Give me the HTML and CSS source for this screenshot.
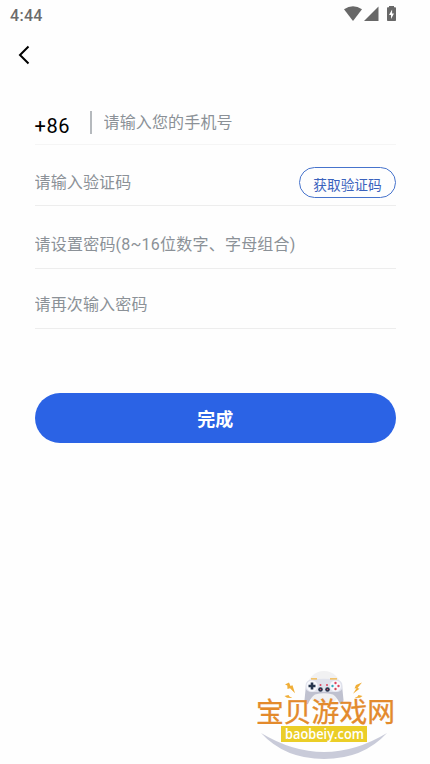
FILE: index.html
```
<!DOCTYPE html>
<html lang="zh-CN">
<head>
    <meta charset="UTF-8">
    <meta name="viewport" content="width=device-width, initial-scale=1.0">
    <title>设置密码</title>
    <link rel="stylesheet" href="styles.css">
</head>
<body>
    <div class="status-bar">
        <span class="time">4:44</span>
        <svg class="status-icons" width="54" height="16" viewBox="0 0 54 16">
            <path d="M0 3.3Q9 -2.7 18 3.3L9 15Z"/>
            <path d="M34.5 0.5V15H20Z"/>
            <path d="M45 1.3V0h5v1.3h1.2q.8 0 .8.8v12.1q0 .8-.8.8h-7.4q-.8 0-.8-.8V2.1q0-.8.8-.8Z"/>
            <path class="bolt" d="M48.1 3.6L45 9h2v4l3-5.4h-1.9Z"/>
        </svg>
    </div>

    <header class="nav">
        <button type="button" class="back" aria-label="返回">
            <svg width="14" height="20" viewBox="0 0 14 20">
                <path d="M11.5 1.5L3 10L11.5 18.5"/>
            </svg>
        </button>
    </header>

    <form class="form">
        <div class="field field-phone">
            <span class="code">+86</span>
            <span class="divider"></span>
            <input type="tel" name="phone" placeholder="请输入您的手机号">
        </div>
        <div class="field field-verify">
            <input type="text" name="verifyCode" placeholder="请输入验证码">
            <button type="button" class="get-code">获取验证码</button>
        </div>
        <div class="field field-password">
            <input type="password" name="password" placeholder="请设置密码(8~16位数字、字母组合)">
        </div>
        <div class="field field-confirm">
            <input type="password" name="passwordConfirm" placeholder="请再次输入密码">
        </div>
        <button type="submit" class="submit">完成</button>
    </form>

    <svg class="watermark" width="170" height="104" viewBox="0 0 170 104">
        <circle cx="79" cy="28" r="17" fill="#f1f1f2"/>
        <path d="M16 73Q79 111 142 73Q118 99 79 99Q40 99 16 73Z" fill="#c9cbd9"/>
        <!-- 手柄 -->
        <path d="M61 25L59.5 40Q60 45 63 44Q66 37 70 34.5Q79 32 88 34.5Q92 37 95 44Q98 45 98.5 40L97 25Z" fill="#bfc1cf"/>
        <path d="M67 19.5Q79 18 91 19.5Q97.5 20 97.5 26Q97.5 32 91 32H67Q60.5 32 60.5 26Q60.5 20 67 19.5Z" fill="#e0e2ec"/>
        <circle cx="67" cy="26" r="5.5" fill="#f7f8fc"/>
        <circle cx="90.5" cy="26" r="5.5" fill="#f7f8fc"/>
        <path d="M66 18.8h6M85 18.8h7" stroke="#f1b33f" stroke-width="1.3"/>
        <path d="M67 22.5v7M63.5 26h7" stroke="#26354c" stroke-width="2.6"/>
        <g fill="#26354c">
            <circle cx="75.5" cy="29.5" r="2.3"/>
            <circle cx="82.5" cy="29.5" r="2.3"/>
        </g>
        <g fill="#e0445f">
            <circle cx="75.5" cy="25" r="1"/>
            <circle cx="82" cy="25" r="1"/>
            <circle cx="75.5" cy="29.5" r=".7"/>
            <circle cx="82.5" cy="29.5" r=".7"/>
            <circle cx="90.5" cy="23" r="1.2"/>
            <circle cx="93.5" cy="26" r="1.2"/>
        </g>
        <circle cx="87.5" cy="26" r="1.2" fill="#35a9bd"/>
        <circle cx="90.5" cy="29" r="1.2" fill="#d34a58"/>
        <!-- 闪电 -->
        <g fill="#f0ae37">
            <path d="M40 24.5l4-2 1.5 3.5 2-.8 2.500 8-5-5-2.500.8-.2-3.500Z"/>
            <path d="M117 22.500l-6 2.500-1.500 3.500 2-.2-3.500 5.500 6.500-5-2-.8Z"/>
            <path d="M39.500 36l4-1 1 1.500 3 1.500-5.500-.2Z"/>
            <path d="M117.500 36l-4-1-1 1.500-3 1.500 5.500-.2Z"/>
        </g>
        <text class="logo-name" x="11" y="62" textLength="139" lengthAdjust="spacingAndGlyphs">宝贝游戏网</text>
        <rect x="36" y="66" width="86" height="16" fill="#ebce27"/>
        <text class="logo-url" x="40" y="78.5" textLength="79" lengthAdjust="spacingAndGlyphs">baobeiy.com</text>
    </svg>
</body>
</html>
```
FILE: styles.css
```
body {
    margin: 0;
    min-height: 764px;
    background-color: #fefefe;
    font-family: Roboto, "Noto Sans CJK SC", sans-serif;
    position: relative;
    overflow: hidden;
}

button, input {
    font-family: inherit;
    border: none;
    background: none;
    padding: 0;
    margin: 0;
}

/* 状态栏 */
.status-bar {
    display: flex;
    justify-content: space-between;
    align-items: center;
    height: 30px;
    padding: 0 32px 0 10px;
    box-sizing: border-box;
}

.time {
    font-size: 16px;
    font-weight: 500;
    color: #6b6b6b;
    letter-spacing: 0.3px;
}

.status-icons {
    fill: #686868;
    margin-top: -2px;
}

.status-icons .bolt {
    fill: #fff;
}

.nav {
    display: flex;
    align-items: center;
    height: 50px;
    padding-left: 17px;
}

.back {
    display: flex;
}

.back path {
    fill: none;
    stroke: #000;
    stroke-width: 2;
}

/* 表单 */
.form {
    margin: 0 34px 0 34.5px;
    padding-top: 20px;
}

.field {
    display: flex;
    align-items: center;
    box-sizing: border-box;
    border-bottom: 1px solid #ededed;
}

.field input {
    flex: 1;
    min-width: 0;
    height: 30px;
    font-size: 16px;
    letter-spacing: 0.15px;
    outline: none;
}

.field input::placeholder {
    color: #8b9197;
    opacity: 1;
}

.field-phone {
    height: 45px;
    border-bottom-color: #f5f5f5;
}

.code {
    width: 55.5px;
    padding-top: 7px;
    font-size: 20px;
    letter-spacing: 0.6px;
    color: #000;
}

.divider {
    width: 2px;
    height: 23px;
    margin-right: 11.5px;
    background-color: #b5b9bd;
}

.field-verify {
    height: 61px;
    padding-top: 15px;
}

.get-code {
    width: 97px;
    height: 31px;
    padding-top: 2px;
    border: 1px solid #4673cc;
    border-radius: 16px;
    font-size: 13.7px;
    color: #3b62bd;
}

.field-password {
    height: 63px;
    padding-top: 14px;
}

.field-password input {
    letter-spacing: 0.22px;
}

.field-confirm {
    height: 60px;
    padding-top: 11px;
}

.submit {
    display: block;
    width: 100%;
    height: 50px;
    margin-top: 64px;
    padding-bottom: 1px;
    border-radius: 25px;
    background-color: #2b63e5;
    color: #fff;
    font-size: 18px;
    font-weight: 700;
}

/* 右下角水印 */
.watermark {
    position: absolute;
    left: 245px;
    top: 660px;
}

.logo-name {
    font-size: 27px;
    font-weight: 400;
    fill: #e38a2c;
    stroke: #e38a2c;
    stroke-width: 0.3px;
}

.logo-url {
    font-family: "Open Sans", sans-serif;
    font-size: 14.5px;
    font-weight: 600;
    fill: #fff;
}
```
